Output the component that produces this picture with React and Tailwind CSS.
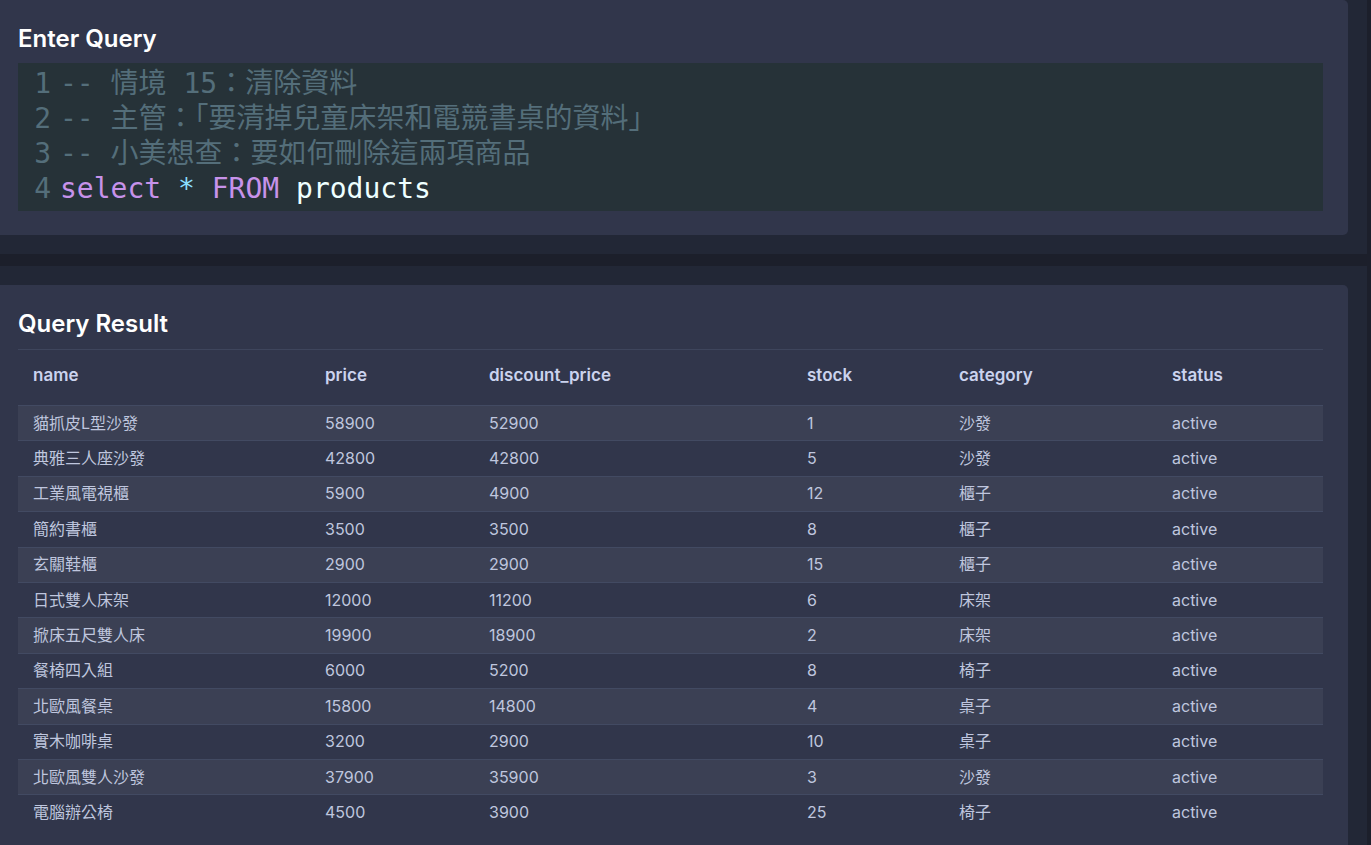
import React from "react";

const rows = [
  ["貓抓皮L型沙發", "58900", "52900", "1", "沙發", "active"],
  ["典雅三人座沙發", "42800", "42800", "5", "沙發", "active"],
  ["工業風電視櫃", "5900", "4900", "12", "櫃子", "active"],
  ["簡約書櫃", "3500", "3500", "8", "櫃子", "active"],
  ["玄關鞋櫃", "2900", "2900", "15", "櫃子", "active"],
  ["日式雙人床架", "12000", "11200", "6", "床架", "active"],
  ["掀床五尺雙人床", "19900", "18900", "2", "床架", "active"],
  ["餐椅四入組", "6000", "5200", "8", "椅子", "active"],
  ["北歐風餐桌", "15800", "14800", "4", "桌子", "active"],
  ["實木咖啡桌", "3200", "2900", "10", "桌子", "active"],
  ["北歐風雙人沙發", "37900", "35900", "3", "沙發", "active"],
  ["電腦辦公椅", "4500", "3900", "25", "椅子", "active"],
];

const columns = [
  { key: "name", w: "w-[292px]" },
  { key: "price", w: "w-[164px]" },
  { key: "discount_price", w: "w-[318px]" },
  { key: "stock", w: "w-[152px]" },
  { key: "category", w: "w-[213px]" },
  { key: "status", w: "w-[166px]" },
];

const sans = "font-['Inter','Noto_Sans_CJK_TC',sans-serif]";

function CodeLine({ n, children }) {
  return (
    <div className="flex h-[35px] leading-[35px]">
      <span className="w-[42px] shrink-0 text-right pr-[9px] text-[#546e7a]">{n}</span>
      <span className="whitespace-pre">{children}</span>
    </div>
  );
}

function QueryEditor() {
  return (
    <div className="bg-[#263238] pt-[3px] pb-[5px] font-['DejaVu_Sans_Mono','Noto_Sans_CJK_TC',monospace] text-[28px]">
      <CodeLine n="1">
        <span className="text-[#546e7a]">-- 情境 15：清除資料</span>
      </CodeLine>
      <CodeLine n="2">
        <span className="text-[#546e7a]">-- 主管：「要清掉兒童床架和電競書桌的資料」</span>
      </CodeLine>
      <CodeLine n="3">
        <span className="text-[#546e7a]">-- 小美想查：要如何刪除這兩項商品</span>
      </CodeLine>
      <CodeLine n="4">
        <span className="text-[#c792ea]">select</span>
        <span className="text-[#eeffff]"> </span>
        <span className="text-[#89ddff]">*</span>
        <span className="text-[#eeffff]"> </span>
        <span className="text-[#c792ea]">FROM</span>
        <span className="text-[#eeffff]"> products</span>
      </CodeLine>
    </div>
  );
}

function ResultTable() {
  return (
    <table className="table-fixed border-collapse w-[1305px] text-[16px]">
      <colgroup>
        {columns.map((c) => (
          <col key={c.key} className={c.w} />
        ))}
      </colgroup>
      <thead>
        <tr className="h-[56px] border-t border-[#3e455c]">
          {columns.map((c) => (
            <th key={c.key} className="text-left text-[17px] font-semibold px-[15px] pb-[3px] text-[#cbd3ee]">
              {c.key}
            </th>
          ))}
        </tr>
      </thead>
      <tbody>
        {rows.map((r, i) => (
          <tr
            key={i}
            className={
              "h-[35.4px] border-t border-[#424a62] " +
              (i % 2 === 0 ? "bg-[#3b4054]" : "bg-[#31364b]")
            }
          >
            {r.map((v, j) => (
              <td key={j} className="px-[15px] pb-[1px] text-[#bfc6de] whitespace-nowrap">
                {v}
              </td>
            ))}
          </tr>
        ))}
      </tbody>
    </table>
  );
}

export default function App() {
  return (
    <div className={`w-[1371px] h-[845px] overflow-hidden bg-[#1c1f2b] pr-[4px] ${sans}`}>
      <div className="bg-[#222736] pr-[19px] pb-[19px]">
        <div className="bg-[#31364b] rounded-r-[5px] pl-[18px] pr-[25px] pt-[22px] pb-[24px]">
          <h2 className="text-[24px] font-semibold text-white leading-[34px] mb-[7px]">Enter Query</h2>
          <QueryEditor />
        </div>
      </div>
      <div className="h-[12px]" />
      <div className="bg-[#222736] pr-[19px] pt-[19px] h-[600px]">
        <div className="bg-[#31364b] rounded-tr-[5px] pl-[18px] pr-[25px] pt-[22px] h-full">
          <h2 className="text-[24px] font-semibold text-white leading-[34px] mb-[8px]">Query Result</h2>
          <ResultTable />
        </div>
      </div>
    </div>
  );
}
